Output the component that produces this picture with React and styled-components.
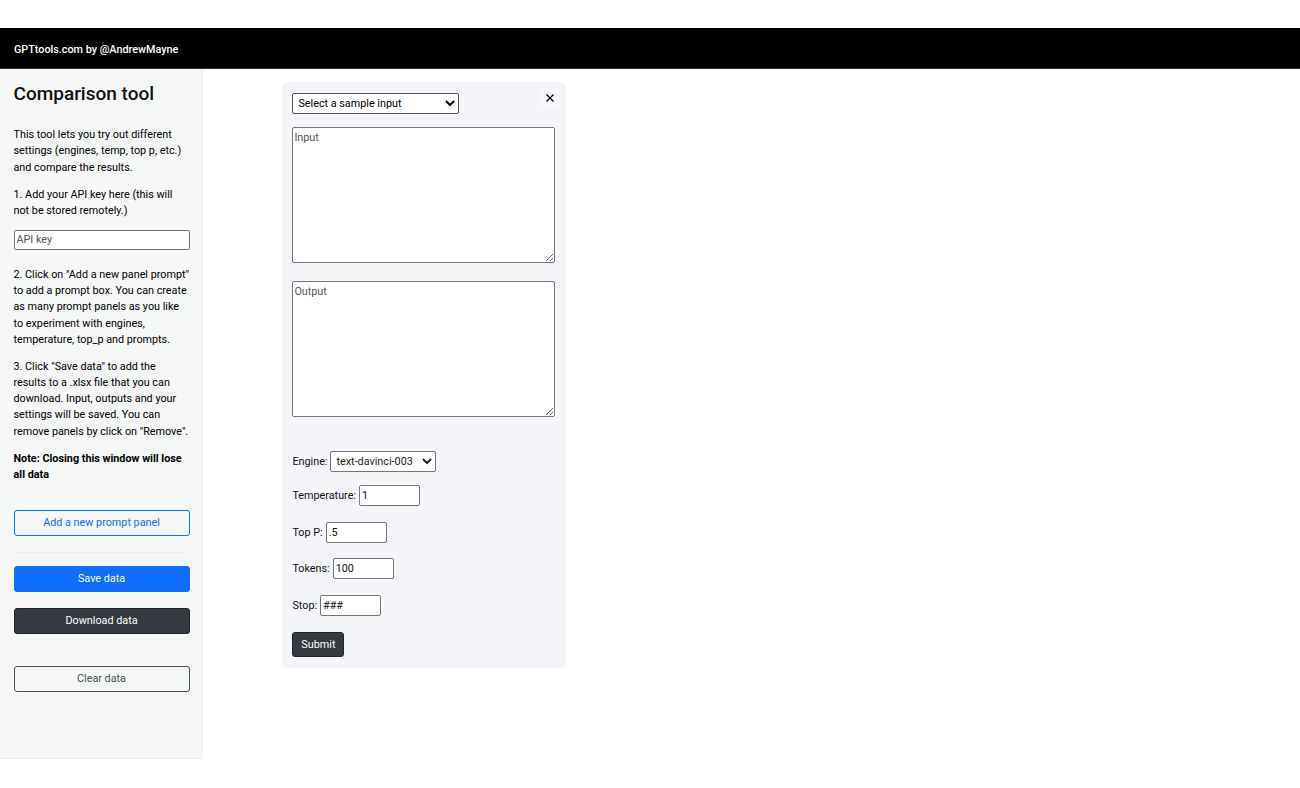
import React from 'react';
import styled, { createGlobalStyle } from 'styled-components';

const Global = createGlobalStyle`
  html, body { margin: 0; padding: 0; background: #fff; }
  body { font-family: Roboto, "Liberation Sans", sans-serif; font-size: 10.8px; line-height: 16.2px; color: #212529; }
  * { box-sizing: border-box; }
`;
const Page = styled.div`
  padding-top: 28px;
  width: 1300px;
`;
const Header = styled.header`
  height: 41px;
  background: #000;
  border-bottom: 1px solid #333;
  color: #fff;
  display: flex;
  align-items: center;
  padding: 4px 14px 0;
  font-size: 10.8px;
  font-weight: 500;
`;
const Main = styled.div`
  display: flex;
  align-items: flex-start;
`;
const Sidebar = styled.aside`
  width: 203px;
  height: 690px;
  background: #f5f6f6;
  border-bottom: 1px solid #eeeeee;
  border-right: 1px solid #f0f1f1;
  padding: 13px 13px 0 13.5px;
  flex: none;
`;
const Title = styled.h1`
  margin: 0 0 22.2px;
  font-size: 19px;
  line-height: 23px;
  font-weight: 500;
  color: #111;
`;
const Para = styled.p`
  margin: 0 0 ${p => p.$gap ?? 10.8}px;
  color: #000;
  font-weight: ${p => (p.$bold ? 700 : 400)};
`;
const KeyInput = styled.input`
  display: block;
  width: 176px;
  height: 20px;
  margin: 0 0 17.1px;
  padding: 0 2px;
  font: 400 10.8px Roboto, sans-serif;
  color: #333;
  border: 1px solid #767676;
  border-radius: 2px;
  background: #fff;
  &::placeholder { color: #555; opacity: 1; }
`;
const Button = styled.button`
  display: block;
  width: ${p => (p.$auto ? '52px' : '176px')};
  height: ${p => (p.$auto ? '25px' : '26px')};
  padding: 0;
  margin: ${p => p.$margin || '0'};
  border-radius: 3px;
  font: 400 10.8px Roboto, sans-serif;
  color: ${p => ({ blue: '#fff', dark: '#fff', outlineBlue: '#0d6efd', outlineDark: '#495057' }[p.$kind])};
  background: ${p => ({ blue: '#0d6efd', dark: '#343a40', outlineBlue: 'transparent', outlineDark: 'transparent' }[p.$kind])};
  border: 1px solid ${p => ({ blue: '#0d6efd', dark: '#212529', outlineBlue: '#0d6efd', outlineDark: '#495057' }[p.$kind])};
`;
const Rule = styled.hr`
  border: 0;
  border-top: 1px solid #eeeeee;
  margin: 16px 0 13px;
`;
const Content = styled.main`
  padding: 13px 0 0 79px;
`;
const Panel = styled.section`
  position: relative;
  width: 284px;
  height: 586px;
  background: #f4f5f9;
  border-radius: 5px;
  padding: 11px 11px 0 10.4px;
`;
const Close = styled.button`
  position: absolute;
  top: 6px;
  right: 6px;
  width: 21px;
  height: 20px;
  display: flex;
  align-items: center;
  justify-content: center;
  padding: 0;
  background: #f6f7fa;
  border: 0;
  color: #000;
`;
const SampleSelect = styled.select`
  display: block;
  width: 167px;
  height: 21px;
  font: 400 10.8px Roboto, sans-serif;
  color: #000;
  background: #fff;
  border: 1px solid #555;
  border-radius: 2px;
  padding: 0 0 0 1px;
  margin-bottom: 13px;
`;
const Area = styled.textarea`
  display: block;
  width: 263px;
  height: 136px;
  margin-bottom: ${p => p.$gap}px;
  padding: 3px 1px 2px;
  font: 400 10.8px/14px Roboto, sans-serif;
  border: 1px solid #767676;
  border-radius: 2px;
  background: #fff;
  &::placeholder { color: #555; opacity: 1; }
`;
const Field = styled.label`
  display: flex;
  align-items: center;
  gap: 3px;
  height: 21px;
  margin-bottom: ${p => p.$gap}px;
  color: #111;
  font-size: 10.8px;
`;
const FieldName = styled.span`
  margin-top: 2px;
`;
const Small = styled.select`
  width: 106px;
  height: 21px;
  font: 400 10.8px Roboto, sans-serif;
  color: #222;
  background: #fff;
  border: 1px solid #767676;
  border-radius: 2px;
  padding: 0 0 0 1px;
`;
const NumInput = styled.input`
  width: 61px;
  height: 21px;
  padding: 0 2px;
  font: 400 10.8px Roboto, sans-serif;
  color: #111;
  background: #fff;
  border: 1px solid #767676;
  border-radius: 2px;
`;

export default function App() {
  return (
    <Page>
      <Global />
      <Header>GPTtools.com by @AndrewMayne</Header>
      <Main>
        <Sidebar>
          <Title>Comparison tool</Title>
          <Para>This tool lets you try out different settings (engines, temp, top p, etc.) and compare the results.</Para>
          <Para>1. Add your API key here (this will not be stored remotely.)</Para>
          <KeyInput placeholder="API key" />
          <Para>2. Click on "Add a new panel prompt" to add a prompt box. You can create as many prompt panels as you like to experiment with engines, temperature, top_p and prompts.</Para>
          <Para>3. Click "Save data" to add the results to a .xlsx file that you can download. Input, outputs and your settings will be saved. You can remove panels by click on "Remove".</Para>
          <Para $bold $gap={27}>Note: Closing this window will lose all data</Para>
          <Button $kind="outlineBlue">Add a new prompt panel</Button>
          <Rule />
          <Button $kind="blue" $margin="0 0 16px">Save data</Button>
          <Button $kind="dark" $margin="0 0 32px">Download data</Button>
          <Button $kind="outlineDark">Clear data</Button>
        </Sidebar>
        <Content>
          <Panel>
            <Close aria-label="Close">
              <svg width="10" height="10" viewBox="0 0 10 10"><path d="M1.5 1.5l7 7M8.5 1.5l-7 7" stroke="#000" strokeWidth="1.3" fill="none" /></svg>
            </Close>
            <SampleSelect defaultValue="s"><option value="s">Select a sample input</option></SampleSelect>
            <Area placeholder="Input" $gap={18} />
            <Area placeholder="Output" $gap={34} />
            <Field $gap={13}><FieldName>Engine:</FieldName><Small defaultValue="d"><option value="d">text-davinci-003</option></Small></Field>
            <Field $gap={16}><FieldName>Temperature:</FieldName><NumInput defaultValue="1" /></Field>
            <Field $gap={15}><FieldName>Top P:</FieldName><NumInput defaultValue=".5" /></Field>
            <Field $gap={16}><FieldName>Tokens:</FieldName><NumInput defaultValue="100" /></Field>
            <Field $gap={16}><FieldName>Stop:</FieldName><NumInput defaultValue="###" /></Field>
            <Button $auto $kind="dark">Submit</Button>
          </Panel>
        </Content>
      </Main>
    </Page>
  );
}
